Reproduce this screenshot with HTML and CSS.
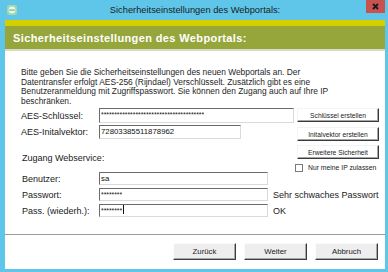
FILE: index.html
```html
<!DOCTYPE html>
<html lang="de">
<head>
    <meta charset="UTF-8">
    <title>Sicherheitseinstellungen des Webportals</title>
    <link rel="stylesheet" href="styles.css">
</head>
<body>
    <div class="window">
        <div class="titlebar">
            <span class="app-icon">
                <svg width="10" height="10" viewBox="0 0 10 10">
                    <rect x="0" y="0" width="10" height="10" rx="2" fill="#9fd6ad"/>
                    <circle cx="5" cy="5" r="3.4" fill="#e9f6ec"/>
                    <rect x="2.2" y="4.4" width="5.6" height="1.4" fill="#7cc38e"/>
                </svg>
            </span>
            <span class="title">Sicherheitseinstellungen des Webportals:</span>
            <span class="close">
                <svg width="19" height="13" viewBox="0 0 19 13">
                    <path d="M7 4 L12 9 M12 4 L7 9" stroke="#1a1a1a" stroke-width="1.8" fill="none"/>
                </svg>
            </span>
        </div>

        <div class="content">
            <div class="stripe"></div>
            <h1 class="banner">Sicherheitseinstellungen des Webportals:</h1>

            <div class="main">
                <p class="intro">Bitte geben Sie die Sicherheitseinstellungen des neuen Webportals an. Der Datentransfer erfolgt AES-256 (Rijndael) Verschlüsselt. Zusätzlich gibt es eine Benutzeranmeldung mit Zugriffspasswort. Sie können den Zugang auch auf Ihre IP beschränken.</p>

                <div class="form-top">
                    <div class="fields">
                        <div class="row row-key">
                            <label>AES-Schlüssel:</label>
                            <div class="field field-key masked">***************************************</div>
                        </div>
                        <div class="row row-iv">
                            <label>AES-Initalvektor:</label>
                            <div class="field field-iv">72803385511878962</div>
                        </div>
                        <div class="section">Zugang Webservice:</div>
                    </div>
                    <div class="actions">
                        <button class="btn-flat">Schlüssel erstellen</button>
                        <button class="btn-flat">Initalvektor erstellen</button>
                        <button class="btn-flat">Erweitere Sicherheit</button>
                        <label class="check"><span class="box"></span>Nur meine IP zulassen</label>
                    </div>
                </div>

                <div class="login">
                    <div class="row">
                        <label>Benutzer:</label>
                        <div class="field field-login">sa</div>
                    </div>
                    <div class="row">
                        <label>Passwort:</label>
                        <div class="field field-login masked">********</div>
                        <span class="status">Sehr schwaches Passwort</span>
                    </div>
                    <div class="row">
                        <label>Pass. (wiederh.):</label>
                        <div class="field field-login masked">********<span class="caret"></span></div>
                        <span class="status">OK</span>
                    </div>
                </div>
            </div>

            <div class="footer">
                <button class="btn">Zurück</button>
                <button class="btn">Weiter</button>
                <button class="btn">Abbruch</button>
            </div>
        </div>
    </div>
</body>
</html>
```

FILE: styles.css
```css
* {
    margin: 0;
    padding: 0;
    box-sizing: border-box;
}

body {
    width: 388px;
    height: 272px;
    overflow: hidden;
    font-family: "Liberation Sans", Arial, sans-serif;
    color: #1a1a1a;
    background: #5fc6e9;
}

.window {
    height: 272px;
    display: flex;
    flex-direction: column;
    padding: 0 3px 3px 5px;
    background-color: #5fc6e9;
}

/* title bar */
.titlebar {
    height: 20px;
    display: grid;
    grid-template-columns: 1fr auto 1fr;
    align-items: center;
}

.app-icon {
    justify-self: start;
    margin-left: 2px;
    height: 10px;
    display: flex;
}

.title {
    font-size: 9.3px;
    color: #1c1c1c;
}

.close {
    justify-self: end;
    align-self: start;
    width: 19px;
    height: 13px;
    display: flex;
    background-color: #c8524f;
}

/* content */
.content {
    flex: 1;
    display: flex;
    flex-direction: column;
    background: white;
}

.stripe {
    height: 6px;
    background-color: #d6cf00;
}

.banner {
    height: 25px;
    padding: 6px 0 0 8px;
    font-size: 11px;
    line-height: 13px;
    letter-spacing: 0.38px;
    font-weight: bold;
    color: white;
    background-color: #96a63b;
    border-bottom: 2px solid #d8dbc5;
}

.main {
    flex: 1;
    padding: 17px 6px 0 16px;
}

.intro {
    max-width: 318px;
    font-size: 8.4px;
    line-height: 9.6px;
    color: #1e1e1e;
}

.form-top {
    display: flex;
    margin-top: 2px;
}

.fields {
    flex: 1;
}

.row {
    display: flex;
    align-items: center;
}

.row label {
    width: 78px;
    font-size: 9px;
}

.field {
    height: 14px;
    padding: 0 1px;
    font-size: 7.8px;
    line-height: 12px;
    color: #111;
    background: white;
    border: 1px solid;
    border-color: #6a6a6a #dadada #dadada #6a6a6a;
    white-space: nowrap;
    overflow: hidden;
}

.masked {
    font-size: 6.8px;
}

.field-key {
    width: 195px;
    height: 15px;
}

.row-iv {
    margin-top: 2px;
}

.field-iv {
    width: 142px;
}

.section {
    margin-top: 14px;
    padding-left: 1px;
    font-size: 9px;
    line-height: 10px;
}

.actions {
    width: 82px;
    display: flex;
    flex-direction: column;
}

.btn-flat {
    height: 14px;
    font-family: inherit;
    font-size: 6.7px;
    color: #1a1a1a;
    background: white;
    border: 1px solid;
    border-color: #f4f4f4 #3a3a3a #3a3a3a #f4f4f4;
    box-shadow: inset -1px -1px 0 #a5a5a5;
}

.btn-flat + .btn-flat {
    margin-top: 5px;
}

.btn-flat:last-of-type {
    margin-top: 4px;
}

.check {
    margin: 5px 0 0 -2px;
    display: flex;
    align-items: center;
    font-size: 6.8px;
    line-height: 8px;
}

.check .box {
    width: 8px;
    height: 8px;
    margin-right: 5px;
    border: 1px solid #7a7a7a;
    background: white;
}

/* login */
.login .row {
    margin-top: 3px;
    padding-left: 1px;
}

.login .row:first-child {
    margin-top: 0;
}

.login .row label {
    width: 77px;
}

.field-login {
    width: 169px;
    height: 13px;
    line-height: 11px;
}

.caret {
    display: inline-block;
    width: 1px;
    height: 9px;
    margin-left: 1px;
    vertical-align: -1px;
    background: #111;
}

.status {
    margin-left: 5px;
    font-size: 9px;
}

/* footer */
.footer {
    height: 35px;
    display: flex;
    justify-content: flex-end;
    align-items: flex-start;
    gap: 8px;
    padding: 8px 7px 0 0;
    border-top: 1px solid #9c9c9c;
}

.btn {
    width: 63px;
    height: 17px;
    font-family: inherit;
    font-size: 7.8px;
    color: #222;
    background-color: #eeeeee;
    border: 1px solid;
    border-color: #fbfbfb #3c3c3c #3c3c3c #fbfbfb;
    box-shadow: inset -1px -1px 0 #a8a8a8;
}
```
